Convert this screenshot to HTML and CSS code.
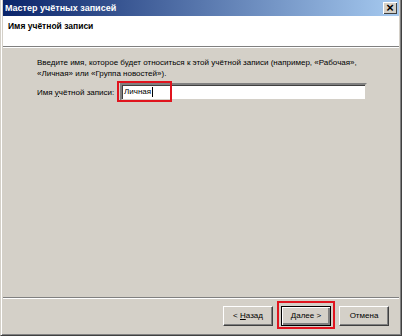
FILE: index.html
```html
<!DOCTYPE html>
<html lang="ru">
<head>
    <meta charset="UTF-8">
    <title>Мастер учётных записей</title>
    <link rel="stylesheet" href="styles.css">
</head>
<body>

    <div class="window">
        <!-- Title bar -->
        <div class="titlebar">
            <span class="title">Мастер учётных записей</span>
            <span class="close">×</span>
        </div>

        <!-- Page header -->
        <div class="header">
            <h1>Имя учётной записи</h1>
        </div>

        <!-- Page content -->
        <div class="content">
            <p>Введите имя, которое будет относиться к этой учётной записи (например, «Рабочая»,<br>«Личная» или «Группа новостей»).</p>
            <div class="field">
                <label>Имя <u>у</u>чётной записи:</label>
                <div class="input">Личная<span class="caret"></span></div>
                <div class="mark mark-input"></div>
            </div>
        </div>

        <!-- Buttons -->
        <div class="footer">
            <button>&lt; <u>Н</u>азад</button>
            <div class="default-wrap">
                <button class="default"><u>Д</u>алее &gt;</button>
                <div class="mark mark-button"></div>
            </div>
            <button>Отмена</button>
        </div>
    </div>

</body>
</html>
```

FILE: styles.css
```css
/* General */
body {
    margin: 0;
    padding: 0;
    font-family: 'Liberation Sans', Arial, sans-serif;
    font-size: 8px;
    color: #000;
    background: #d4d0c8;
}

/* Window frame */
.window {
    height: 336px;
    box-sizing: border-box;
    display: flex;
    flex-direction: column;
    background: #d4d0c8;
    border-left: 1px solid #d4d0c8;
    border-right: 1px solid #404040;
    border-bottom: 1px solid #404040;
    padding: 0 2px 2px 2px;
    box-shadow: inset 1px 0 #fff, inset -1px -1px #808080;
}

/* Title bar */
.titlebar {
    height: 16px;
    display: flex;
    align-items: center;
    justify-content: space-between;
    padding: 0 2px 0 2px;
    background: linear-gradient(to right, #0a246a, #a6caf0);
}

.title {
    color: #fff;
    font-weight: bold;
    font-size: 9px;
}

.close {
    width: 14px;
    height: 12px;
    line-height: 12px;
    text-align: center;
    font-size: 13px;
    font-weight: bold;
    background: #d4d0c8;
    box-shadow: inset 1px 1px #fff, inset -1px -1px #404040;
}

/* Header */
.header {
    height: 30px;
    background: #fff;
    border-bottom: 1px solid #808080;
    box-shadow: 0 1px #fff;
    padding-left: 5px;
}

.header h1 {
    margin: 5px 0 0;
    font-size: 8.5px;
    line-height: 11px;
    font-weight: bold;
}

/* Content */
.content {
    flex: 1;
    margin-top: 1px;
    padding: 9px 0 0 34px;
}

.content p {
    margin: 0 0 4px;
    line-height: 11px;
    white-space: nowrap;
}

.field {
    display: flex;
    align-items: center;
    position: relative;
}

.field label {
    width: 83px;
    flex-shrink: 0;
    white-space: nowrap;
}

.input {
    width: 241px;
    height: 14px;
    line-height: 14px;
    padding-left: 2px;
    background: #fff;
    border: 2px solid;
    border-color: #808080 #d4d0c8 #d4d0c8 #808080;
    box-shadow: inset 1px 1px #404040;
}

.caret {
    display: inline-block;
    width: 1px;
    height: 10px;
    margin-left: 1px;
    vertical-align: middle;
    background: #000;
}

/* Red annotation boxes */
.mark {
    position: absolute;
    border: 2px solid #e0141e;
}

.mark-input {
    left: 80px;
    top: -2px;
    width: 51px;
    height: 17px;
}

.mark-button {
    left: -4px;
    top: -5px;
    width: 54px;
    height: 24px;
}

/* Footer */
.footer {
    height: 35px;
    border-top: 1px solid #808080;
    box-shadow: inset 0 1px #fff;
    display: flex;
    align-items: center;
    justify-content: flex-end;
    gap: 8px;
    padding: 0 10px 0 0;
}

.default-wrap {
    position: relative;
    display: flex;
}

button {
    width: 50px;
    height: 20px;
    padding: 0;
    font-family: 'Liberation Sans', Arial, sans-serif;
    font-size: 8px;
    color: #000;
    background: #d4d0c8;
    border: 1px solid;
    border-color: #fff #404040 #404040 #fff;
    box-shadow: inset -1px -1px #808080;
}

button.default {
    border: 1px solid #000;
    box-shadow: inset 1px 1px #fff, inset -2px -2px #808080;
}
```
